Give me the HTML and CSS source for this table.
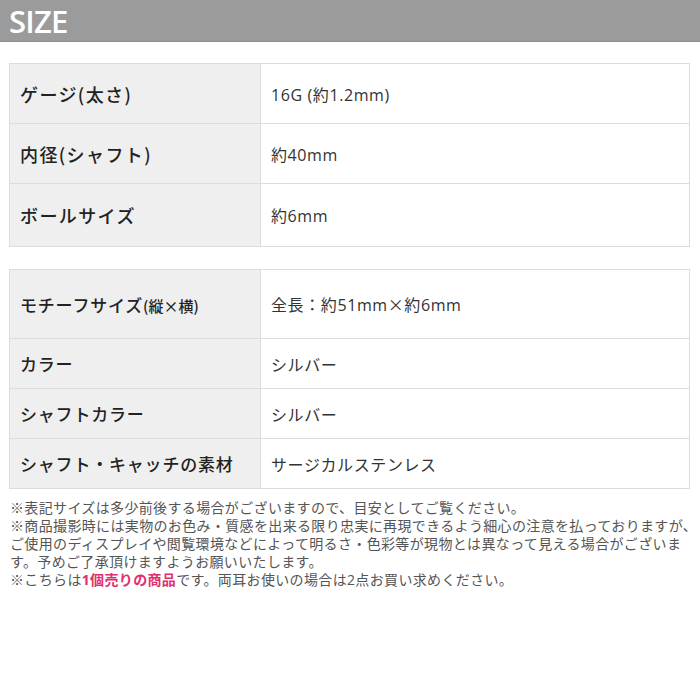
FILE: index.html
```html
<!DOCTYPE html>
<html lang="ja">
<head>
<meta charset="utf-8">
<title>SIZE</title>
<link rel="stylesheet" href="styles.css">
</head>
<body>
<header class="bar"><h1 class="bar-title">SIZE</h1></header>
<main class="content">
  <table class="spec spec-a">
    <tr class="r1"><th>ゲージ(太さ)</th><td>16G (約1.2mm)</td></tr>
    <tr class="r2"><th>内径(シャフト)</th><td>約40mm</td></tr>
    <tr class="r3"><th>ボールサイズ</th><td>約6mm</td></tr>
  </table>
  <table class="spec spec-b">
    <tr class="r4"><th>モチーフサイズ<span class="small">(縦×横)</span></th><td>全長：約51mm<span class="cjk">×</span>約6mm</td></tr>
    <tr class="r5"><th>カラー</th><td>シルバー</td></tr>
    <tr class="r5"><th>シャフトカラー</th><td>シルバー</td></tr>
    <tr class="r5"><th>シャフト・キャッチの素材</th><td>サージカルステンレス</td></tr>
  </table>
  <p class="notes">※表記サイズは多少前後する場合がございますので、目安としてご覧ください。<br>※商品撮影時には実物のお色み・質感を出来る限り忠実に再現できるよう細心の注意を払っておりますが、<br>ご使用のディスプレイや閲覧環境などによって明るさ・色彩等が現物とは異なって見える場合がございま<br>す。予めご了承頂けますようお願いいたします。<br>※こちらは<strong class="em">1個売りの商品</strong>です。両耳お使いの場合は2点お買い求めください。</p>
</main>
</body>
</html>
```

FILE: styles.css
```css
html, body {
  margin: 0;
  padding: 0;
  background: #fff;
}
body {
  font-family: "Open Sans", "Noto Sans CJK JP", sans-serif;
  color: #333;
}
.bar {
  height: 42px;
  background: #9b9b9b;
  border-bottom: 1px solid #8c8c8c;
  box-sizing: border-box;
  display: flex;
  align-items: center;
  padding-left: 9px;
}
.bar-title {
  margin: 0;
  color: #fff;
  font-family: "Open Sans", sans-serif;
  font-weight: 600;
  font-size: 31px;
  line-height: 1;
  letter-spacing: -0.8px;
  position: relative;
  top: 1px;
}
.content {
  padding: 21px 10px 0 9px;
}
.spec {
  width: 681px;
  border-collapse: collapse;
  table-layout: fixed;
}
.spec th, .spec td {
  border: 1px solid #dcdcdc;
  padding: 0;
  vertical-align: middle;
  text-align: left;
}
.spec th {
  width: 240px;
  background: #efefef;
  color: #222;
  font-family: "Noto Sans CJK JP", sans-serif;
  font-weight: 500;
  padding-left: 10px;
}
.spec td {
  background: #fff;
  color: #333;
  font-size: 16px;
  letter-spacing: 0.6px;
  padding-left: 10px;
}
.cjk {
  font-family: "Noto Sans CJK JP", sans-serif;
}
.spec-a th {
  font-size: 18px;
  letter-spacing: 1.4px;
}
.spec-b {
  margin-top: 22px;
}
.spec-b th {
  font-size: 17px;
  letter-spacing: 0.8px;
}
.small {
  font-size: 15px;
  letter-spacing: 0;
}
.r1 th, .r1 td { height: 59px; }
.r2 th, .r2 td { height: 59px; }
.r3 th, .r3 td { height: 62px; }
.r4 th, .r4 td { height: 68px; }
.r5 th, .r5 td { height: 49px; }
.notes {
  margin: 10px 0 0 1px;
  font-size: 14px;
  line-height: 18px;
  letter-spacing: 0.35px;
  color: #555;
  white-space: nowrap;
}
.em {
  color: #e0306f;
  font-weight: 700;
}
```
